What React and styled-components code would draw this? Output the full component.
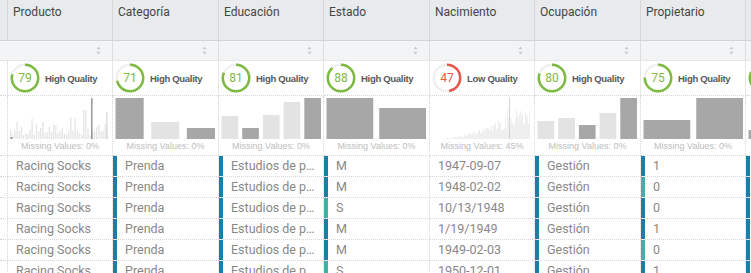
import React from "react";
import styled, { createGlobalStyle } from "styled-components";

const COLS = "8px 105px 106px 105px 106px 105px 106px 105px 106px";
const DARK = "#1b7ea6";
const TEAL = "#48ada5";
const BAR_DARK = "#a7a7a7";
const BAR_LIGHT = "#e3e3e3";

const GlobalStyle = createGlobalStyle`
  html, body {
    margin: 0;
    padding: 0;
    background: #fff;
  }
  body {
    font-family: Roboto, "Liberation Sans", Arial, sans-serif;
    overflow: hidden;
  }
`;

// tiny seeded generator so the histograms stay the same each render
const seeded = (seed) => {
  let s = seed;
  return () => {
    s = (s * 9301 + 49297) % 233280;
    return s / 233280;
  };
};

const categorical = (list) => {
  const n = list.length;
  const gap = n === 2 ? 6 : n === 3 ? 7.5 : 4;
  const w = (99.5 - gap * (n - 1)) / n;
  return list.map(([h, dark], i) => ({
    x: 2.5 + i * (w + gap),
    w,
    h,
    fill: dark ? BAR_DARK : BAR_LIGHT,
  }));
};

const productoBars = () => {
  const r = seeded(7);
  const bars = [];
  for (let i = 0; i < 46; i++) {
    let h = 3 + r() * 12;
    if (r() > 0.8) h += 8 + r() * 9;
    bars.push({ x: 2 + i * 2.15, w: 1.3, h, fill: "#e4e4e4" });
  }
  bars.push({ x: 2.5, w: 2, h: 2, fill: "#9a9a9a" });
  bars.push({ x: 83, w: 1.6, h: 41, fill: "#9d9d9d" });
  bars.push({ x: 98, w: 1.5, h: 27, fill: "#e0e0e0" });
  return bars;
};

const nacimientoBars = () => {
  const r = seeded(31);
  const bars = [];
  for (let i = 0; i < 92; i++) {
    const t = i / 92;
    let h = Math.pow(t, 1.6) * 26 * (0.55 + r() * 0.8);
    if (t > 0.6 && r() > 0.8) h += 10;
    bars.push({ x: 8 + i, w: 0.8, h: Math.min(h, 40), fill: "#ececec" });
  }
  bars.push({ x: 79, w: 1, h: 41, fill: "#d2d2d2" });
  return bars;
};

const columns = [
  {
    name: "Producto",
    score: 79,
    missing: "0%",
    chart: productoBars(),
    values: Array(6).fill("Racing Socks"),
    marks: null,
  },
  {
    name: "Categoría",
    score: 71,
    missing: "0%",
    chart: categorical([[41, 1], [17, 0], [11, 1]]),
    values: Array(6).fill("Prenda"),
    marks: Array(6).fill(DARK),
  },
  {
    name: "Educación",
    score: 81,
    missing: "0%",
    chart: categorical([[23, 0], [11, 1], [24, 0], [37, 0], [41, 1]]),
    values: Array(6).fill("Estudios de p..."),
    marks: Array(6).fill(DARK),
  },
  {
    name: "Estado",
    score: 88,
    missing: "0%",
    chart: categorical([[41, 1], [31, 1]]),
    values: ["M", "M", "S", "M", "M", "S"],
    marks: [DARK, DARK, TEAL, DARK, DARK, TEAL],
  },
  {
    name: "Nacimiento",
    score: 47,
    missing: "45%",
    chart: nacimientoBars(),
    values: ["1947-09-07", "1948-02-02", "10/13/1948", "1/19/1949", "1949-02-03", "1950-12-01"],
    marks: null,
  },
  {
    name: "Ocupación",
    score: 80,
    missing: "0%",
    chart: categorical([[18, 0], [21, 0], [14, 1], [26, 0], [41, 1]]),
    values: Array(6).fill("Gestión"),
    marks: Array(6).fill(DARK),
  },
  {
    name: "Propietario",
    score: 75,
    missing: "0%",
    chart: categorical([[19, 1], [41, 1]]),
    values: ["1", "0", "0", "1", "0", "1"],
    marks: [DARK, TEAL, DARK, DARK, TEAL, DARK],
  },
  // next column, scrolled mostly out of view
  {
    name: "",
    score: 82,
    missing: "",
    chart: categorical([[9, 1], [41, 1], [20, 0]]),
    values: Array(6).fill(""),
    marks: Array(6).fill(DARK),
    partial: true,
  },
];

const Gauge = ({ score, showValue }) => {
  const color = score >= 60 ? "#7dba41" : "#e8574b";
  const r = 13.2;
  const c = 2 * Math.PI * r;
  return (
    <GaugeWrap>
      <svg width="30" height="30" viewBox="0 0 30 30">
        <circle cx="15" cy="15" r={r} fill="none" stroke="#f0f0f0" strokeWidth="2.5" />
        <circle
          cx="15"
          cy="15"
          r={r}
          fill="none"
          stroke={color}
          strokeWidth="2.5"
          strokeDasharray={`${(c * score) / 100} ${c}`}
          transform="rotate(-90 15 15)"
        />
      </svg>
      {showValue && <GaugeValue $color={color}>{score}</GaugeValue>}
    </GaugeWrap>
  );
};

const Histogram = ({ bars }) => (
  <svg width="103" height="41" viewBox="0 0 103 41" style={{ display: "block" }}>
    {bars.map((b, i) => (
      <rect key={i} x={b.x} y={41 - b.h} width={b.w} height={b.h} fill={b.fill} />
    ))}
  </svg>
);

const SortIcon = () => (
  <svg width="5" height="9" viewBox="0 0 5 9">
    <path d="M2.5 0.5 L4.5 3.3 L0.5 3.3 Z" fill="#c9c9c9" />
    <path d="M2.5 8.5 L4.5 5.7 L0.5 5.7 Z" fill="#c9c9c9" />
  </svg>
);

const App = () => {
  return (
    <>
      <GlobalStyle />
      <Table>
        <Row>
          <HeaderCell />
          {columns.map((col, i) => (
            <HeaderCell key={i}>{col.name}</HeaderCell>
          ))}
        </Row>
        <Row>
          <FilterCell />
          {columns.map((_, i) => (
            <FilterCell key={i}>
              <SortIcon />
            </FilterCell>
          ))}
        </Row>
        <Row>
          <QualityCell />
          {columns.map((col, i) => (
            <QualityCell key={i}>
              <Gauge score={col.score} showValue={!col.partial} />
              {!col.partial && (
                <QualityLabel>{col.score >= 60 ? "High Quality" : "Low Quality"}</QualityLabel>
              )}
            </QualityCell>
          ))}
        </Row>
        <Row>
          <HistCell />
          {columns.map((col, i) => (
            <HistCell key={i}>
              <Histogram bars={col.chart} />
              {col.missing && <Missing>Missing Values: {col.missing}</Missing>}
            </HistCell>
          ))}
        </Row>
        {[0, 1, 2, 3, 4, 5].map((r) => (
          <Row key={r}>
            <DataCell />
            {columns.map((col, i) => (
              <DataCell key={i}>
                {col.marks && <Marker $color={col.marks[r]} />}
                <CellText>{col.values[r]}</CellText>
              </DataCell>
            ))}
          </Row>
        ))}
      </Table>
    </>
  );
};

const Table = styled.div`
  width: 751px;
  height: 273px;
  overflow: hidden;
  background: #fff;
`;

const Row = styled.div`
  display: grid;
  grid-template-columns: ${COLS};
  width: max-content;
`;

const HeaderCell = styled.div`
  box-sizing: border-box;
  height: 41px;
  padding: 5px 0 0 5px;
  background: #e9eaec;
  border-right: 1px solid #d6d7d9;
  border-bottom: 1px solid #d2d3d5;
  font-size: 12px;
  line-height: 14px;
  color: #454545;
  white-space: nowrap;
  overflow: hidden;
`;

const FilterCell = styled.div`
  box-sizing: border-box;
  height: 20px;
  display: flex;
  align-items: center;
  justify-content: flex-end;
  padding-right: 11px;
  background: #f3f4f6;
  border-right: 1px solid #dcdddf;
  border-bottom: 1px solid #e4e5e7;
`;

const QualityCell = styled.div`
  box-sizing: border-box;
  height: 35px;
  display: flex;
  align-items: center;
  gap: 5px;
  padding-left: 2px;
  border-right: 1px solid #e6e6e6;
  border-bottom: 1px dotted #d6d6d6;
  overflow: hidden;
`;

const GaugeWrap = styled.div`
  display: grid;
  place-items: center;
  width: 30px;
  height: 30px;
  flex-shrink: 0;

  & > * {
    grid-area: 1 / 1;
  }
`;

const GaugeValue = styled.span`
  font-size: 12px;
  line-height: 1;
  color: ${(p) => p.$color};
`;

const QualityLabel = styled.span`
  font-family: "Liberation Sans", Arial, sans-serif;
  font-size: 9.5px;
  font-weight: bold;
  letter-spacing: -0.3px;
  color: #595959;
  white-space: nowrap;
`;

const HistCell = styled.div`
  box-sizing: border-box;
  height: 60px;
  padding-top: 2px;
  border-right: 1px dotted #d6d6d6;
  border-bottom: 1px dotted #d6d6d6;
  overflow: hidden;
`;

const Missing = styled.div`
  margin-top: 1px;
  font-family: "Liberation Sans", Arial, sans-serif;
  font-size: 9px;
  line-height: 13px;
  color: #bdbdbd;
  text-align: center;
  white-space: nowrap;
`;

const DataCell = styled.div`
  box-sizing: border-box;
  height: 21px;
  display: flex;
  border-right: 1px dotted #d6d6d6;
  border-bottom: 1px dotted #d6d6d6;
  overflow: hidden;
`;

const Marker = styled.div`
  width: 4px;
  flex-shrink: 0;
  background: ${(p) => p.$color};
`;

const CellText = styled.span`
  flex: 1;
  min-width: 0;
  padding: 0 8px;
  font-size: 12.5px;
  line-height: 20px;
  color: #888;
  white-space: nowrap;
  overflow: hidden;
  text-overflow: ellipsis;
`;

export default App;
